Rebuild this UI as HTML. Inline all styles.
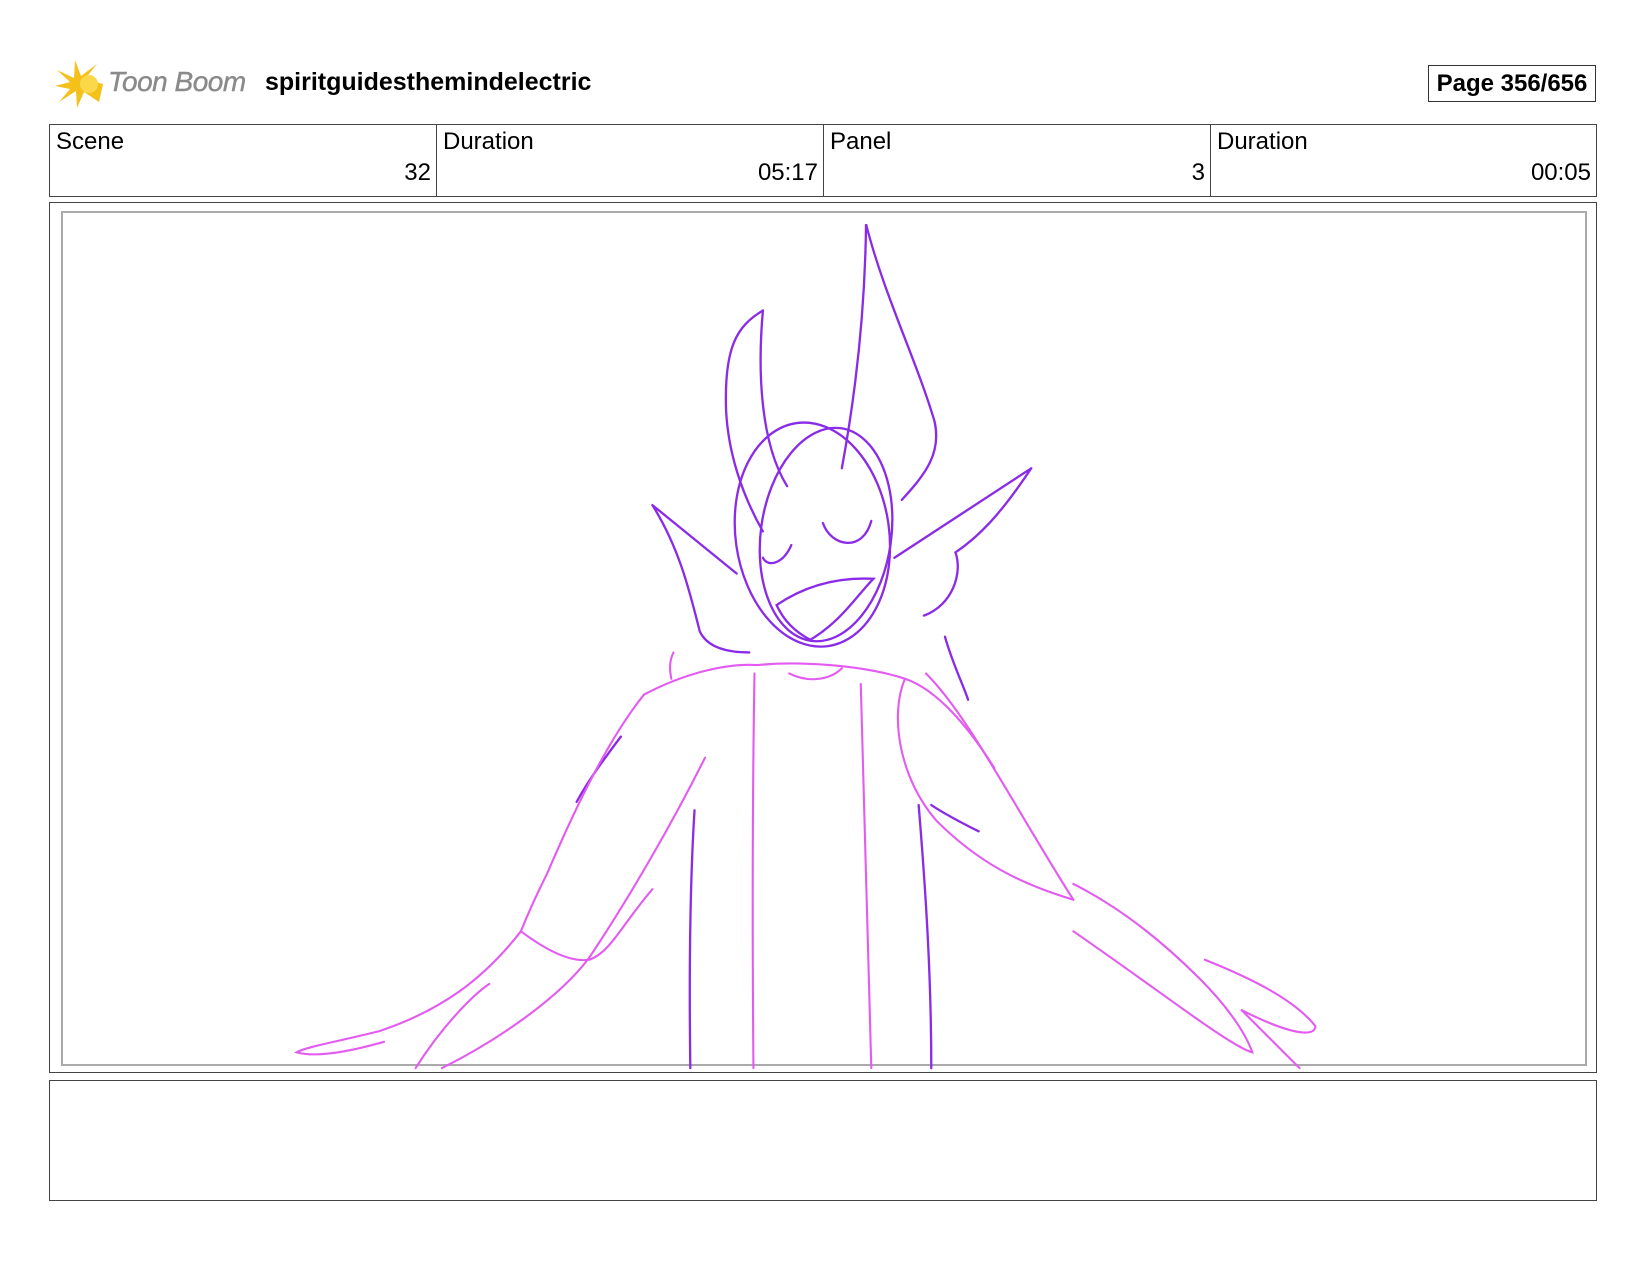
<!DOCTYPE html>
<html><head><meta charset="utf-8"><style>
html,body{margin:0;padding:0;background:#fff;}
body{width:1650px;height:1275px;position:relative;overflow:hidden;font-family:"Liberation Sans",sans-serif;}
.abs{position:absolute}
.lbl{font-size:24px;color:#000;}
</style></head><body>
<svg class="abs" style="left:53px;top:58px" width="52" height="52" viewBox="0 0 52 52">
<g fill="#f4c11a">
<path d="M50 26 L32 21 L44 6 L28 18 L22 2 L21 20 L4 12 L17 24 L2 28 L17 31 L6 44 L23 33 L24 50 L31 34 L46 44 Z"/>
</g><circle cx="36" cy="26" r="9" fill="#fbd84a"/>
</svg>
<div class="abs" style="left:108px;top:66px;font-size:28px;font-style:italic;color:#8a8a8a;letter-spacing:-0.5px;-webkit-text-stroke:0.4px #8a8a8a">Toon Boom</div>
<div class="abs" style="left:265px;top:68px;font-size:25px;font-weight:bold">spiritguidesthemindelectric</div>
<div class="abs" style="left:1428px;top:65px;width:168px;height:37px;border:1px solid #333;box-sizing:border-box;font-size:24px;font-weight:bold;text-align:center;line-height:36px">Page 356/656</div>
<div class="abs" style="left:49px;top:124px;width:1548px;height:73px;border:1px solid #444;box-sizing:border-box"></div>
<div class="abs" style="left:436px;top:124px;width:1px;height:73px;background:#444"></div>
<div class="abs" style="left:823px;top:124px;width:1px;height:73px;background:#444"></div>
<div class="abs" style="left:1210px;top:124px;width:1px;height:73px;background:#444"></div>
<div class="abs lbl" style="left:56px;top:128px">Scene</div>
<div class="abs lbl" style="left:443px;top:128px">Duration</div>
<div class="abs lbl" style="left:830px;top:128px">Panel</div>
<div class="abs lbl" style="left:1217px;top:128px">Duration</div>
<div class="abs lbl" style="left:300px;width:131px;text-align:right;top:159px">32</div>
<div class="abs lbl" style="left:700px;width:118px;text-align:right;top:159px">05:17</div>
<div class="abs lbl" style="left:1100px;width:105px;text-align:right;top:159px">3</div>
<div class="abs lbl" style="left:1450px;width:141px;text-align:right;top:159px">00:05</div>
<div class="abs" style="left:49px;top:202px;width:1548px;height:871px;border:1px solid #444;box-sizing:border-box"></div>
<div class="abs" style="left:61px;top:211px;width:1526px;height:855px;border:2px solid #aaa;box-sizing:border-box"></div>
<div class="abs" style="left:49px;top:1080px;width:1548px;height:121px;border:1px solid #444;box-sizing:border-box"></div>
<svg class="abs" style="left:0;top:0" width="1650" height="1275" viewBox="0 0 1568 1211.6" preserveAspectRatio="none">
<g fill="none" stroke="#8a2be8" stroke-width="2.2" stroke-linecap="round">
<path d="M800 445 C812 380 822 300 823 213 C840 280 870 340 888 400 C895 430 880 450 857 475"/>
<path d="M725 295 C700 310 688 330 690 390 C692 430 705 470 725 505"/>
<path d="M725 295 C720 350 722 420 748 462"/>
<ellipse cx="772" cy="508" rx="73" ry="107" transform="rotate(-8 772 508)"/>
<ellipse cx="785" cy="508" rx="62" ry="102" transform="rotate(8 785 508)"/>
<path d="M620 480 L700 545 M620 480 C645 520 655 560 665 600 C672 615 690 620 712 620"/>
<path d="M980 445 L850 530 M980 445 C950 490 930 510 908 525 C915 545 905 575 878 585"/>
<path d="M782 497 C790 520 820 525 828 495"/>
<path d="M725 530 C730 540 745 535 752 518"/>
<path d="M738 575 C760 560 790 548 830 550 C815 565 800 590 770 608 C755 600 745 590 738 575Z"/>
<path d="M898 605 C905 630 915 650 920 665"/>
<path d="M660 770 C655 850 655 940 656 1015"/>
<path d="M873 765 C880 850 885 930 885 1015"/>
<path d="M548 762 C560 740 575 720 590 700"/>
<path d="M885 765 C900 775 920 785 930 790"/>
</g>
<g fill="none" stroke="#e35bf0" stroke-width="2" stroke-linecap="round">
<path d="M612 660 C650 640 690 630 720 632 C760 628 820 632 860 645 C890 655 920 690 945 730"/>
<path d="M612 660 C580 700 550 760 520 830 C505 860 497 880 495 885"/>
<path d="M670 720 C640 780 600 850 560 910 C530 950 470 990 420 1015"/>
<path d="M495 885 C460 930 420 960 360 980 C320 990 290 995 282 1000 C300 1005 330 1000 365 990"/>
<path d="M495 885 C515 900 540 915 560 912 C580 905 590 880 620 845"/>
<path d="M395 1015 C420 975 450 945 465 935"/>
<path d="M860 645 C845 680 855 740 890 780 C930 820 970 840 1020 855"/>
<path d="M880 640 C920 680 960 760 1020 855"/>
<path d="M1020 840 C1060 860 1100 890 1140 930 C1170 960 1185 985 1190 1000 C1170 995 1100 940 1020 885"/>
<path d="M1145 912 C1190 930 1230 950 1250 975 C1250 985 1230 985 1180 960"/>
<path d="M1180 960 C1200 980 1220 1000 1235 1015"/>
<path d="M717 640 C715 760 715 900 716 1015"/>
<path d="M818 650 C822 780 826 900 828 1015"/>
<path d="M750 640 C770 650 790 645 800 635"/>
<path d="M640 620 C635 630 637 640 638 645"/>
</g>
</svg>
</body></html>
